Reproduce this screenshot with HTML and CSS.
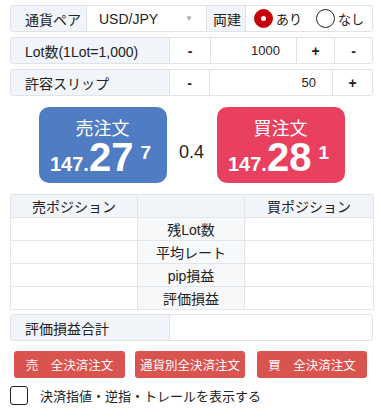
FILE: index.html
```html
<!DOCTYPE html>
<html lang="ja">
<head>
<meta charset="utf-8">
<link rel="stylesheet" href="styles.css">
</head>
<body>
<div class="app">
  <div class="row">
    <div class="cell label w-pair">通貨ペア</div>
    <div class="cell select">USD/JPY<span class="arrow">▼</span></div>
    <div class="cell label w-ryo">両建</div>
    <div class="cell radios">
      <span class="radio on"></span><span class="rtext">あり</span>
      <span class="radio"></span><span class="rtext">なし</span>
    </div>
  </div>
  <div class="row">
    <div class="cell label w-lot">Lot数(1Lot=1,000)</div>
    <div class="cell btn w41">-</div>
    <div class="cell input w86">1000</div>
    <div class="cell btn w38">+</div>
    <div class="cell btn grow">-</div>
  </div>
  <div class="row">
    <div class="cell label w-lot">許容スリップ</div>
    <div class="cell btn w40">-</div>
    <div class="cell input grow">50</div>
    <div class="cell btn w40">+</div>
  </div>

  <div class="prices">
    <div class="pbox sell">
      <div class="ptitle">売注文</div>
      <div class="pnum"><span class="psmall">147.</span><span class="pbig">27</span><span class="psup">7</span></div>
    </div>
    <div class="spread">0.4</div>
    <div class="pbox buy">
      <div class="ptitle">買注文</div>
      <div class="pnum"><span class="psmall">147.</span><span class="pbig">28</span><span class="psup">1</span></div>
    </div>
  </div>

  <table class="pos">
    <colgroup><col class="c1"><col class="c2"><col class="c3"></colgroup>
    <tr class="head"><td>売ポジション</td><td></td><td>買ポジション</td></tr>
    <tr><td></td><td class="mid">残Lot数</td><td></td></tr>
    <tr><td></td><td class="mid">平均レート</td><td></td></tr>
    <tr><td></td><td class="mid">pip損益</td><td></td></tr>
    <tr><td></td><td class="mid">評価損益</td><td></td></tr>
  </table>

  <div class="row total">
    <div class="cell label w-lot">評価損益合計</div>
    <div class="cell grow"></div>
  </div>

  <div class="actions">
    <div class="abtn">売　全決済注文</div>
    <div class="abtn">通貨別全決済注文</div>
    <div class="abtn">買　全決済注文</div>
  </div>

  <div class="check">
    <span class="box"></span>
    <span class="ctext">決済指値・逆指・トレールを表示する</span>
  </div>
</div>
</body>
</html>
```

FILE: styles.css
```css
html, body {
  margin: 0;
  padding: 0;
  background: #ffffff;
}
body {
  font-family: "Liberation Sans", "Noto Sans CJK JP", sans-serif;
  color: #222;
  font-size: 14px;
}
.app {
  width: 363px;
  padding: 5px 0 0 10px;
}
.row {
  display: flex;
  height: 27px;
  box-sizing: border-box;
  border: 1px solid #dfe3e8;
  border-radius: 3px;
  margin-bottom: 5px;
  overflow: hidden;
}
.cell {
  display: flex;
  align-items: center;
  box-sizing: border-box;
  border-left: 1px solid #dfe3e8;
  height: 100%;
  white-space: nowrap;
}
.cell:first-child { border-left: none; }
.label {
  background: #f1f4f8;
  padding-left: 14px;
  font-size: 14px;
  color: #222;
}
.w-pair { width: 75px; flex: none; }
.w-ryo { width: 39px; padding-left: 6px; flex: none; }
.w-lot { width: 158px; flex: none; }
.select {
  width: 120px;
  flex: none;
  padding-left: 12px;
  justify-content: space-between;
  padding-right: 13px;
  font-size: 14px;
}
.arrow {
  color: #aaa;
  font-size: 8px;
}
.radios {
  flex: 1;
  min-width: 0;
  padding-left: 8px;
  font-size: 13px;
}
.radio {
  flex: none;
  width: 19px;
  height: 19px;
  box-sizing: border-box;
  border-radius: 50%;
  border: 1.5px solid #222;
  margin-right: 3px;
  position: relative;
}
.radio.on {
  background: #c8000a;
  border-color: #c8000a;
}
.radio.on::after {
  content: "";
  position: absolute;
  left: 50%;
  top: 50%;
  width: 5px;
  height: 5px;
  margin: -2.5px 0 0 -2.5px;
  border-radius: 50%;
  background: #fff;
}
.rtext { flex: none; margin-right: 14px; }
.btn {
  justify-content: center;
  font-size: 14px;
  font-weight: bold;
  flex: none;
}
.w41 { width: 41px; }
.w40 { width: 40px; }
.w38 { width: 38px; }
.w86 { width: 86px; flex: none; }
.grow { flex: 1; }
.input {
  justify-content: flex-end;
  padding-right: 16px;
  font-size: 13px;
}

.prices {
  display: flex;
  justify-content: center;
  align-items: center;
  margin-top: 11px;
  height: 76px;
}
.pbox {
  width: 128px;
  height: 76px;
  border-radius: 10px;
  color: #fff;
  display: flex;
  flex-direction: column;
  align-items: center;
  box-sizing: border-box;
  padding-top: 9px;
}
.sell { background: #4f7cc3; }
.buy { background: #e9405f; }
.ptitle {
  font-family: "Noto Sans CJK JP", sans-serif;
  font-size: 18px;
  line-height: 22px;
}
.pnum {
  font-weight: bold;
  line-height: 38px;
  white-space: nowrap;
  margin-right: 4px;
}
.psmall { font-size: 20px; }
.pbig { font-size: 40px; }
.psup {
  font-size: 19px;
  vertical-align: top;
  position: relative;
  top: -4px;
  margin-left: 7px;
}
.spread {
  width: 50px;
  text-align: center;
  font-size: 18px;
  padding-top: 14px;
}

.pos {
  margin-top: 11px;
  width: 363px;
  border-collapse: collapse;
  table-layout: fixed;
  font-size: 14px;
}
.c1 { width: 127px; }
.c2 { width: 107px; }
.c3 { width: 129px; }
.pos td {
  border: 1px solid #e2e6ea;
  height: 22px;
  padding: 0;
  text-align: center;
  font-weight: normal;
}
.pos .head td { background: #f1f4f8; }
.pos td.mid { background: #f7f8fa; }

.total {
  margin-top: 4px;
  margin-bottom: 0;
}
.actions {
  display: grid;
  grid-template-columns: 111px 110px 112px;
  column-gap: 10px;
  padding-left: 4px;
  margin-top: 10px;
}
.abtn {
  background: #d9534f;
  color: #fff;
  height: 27px;
  border-radius: 3px;
  display: flex;
  align-items: center;
  justify-content: center;
  font-size: 12.5px;
}
.actions .abtn:last-child { margin-left: 2px; }
.check {
  display: flex;
  align-items: center;
  margin-top: 8px;
}
.box {
  width: 18px;
  height: 19px;
  box-sizing: border-box;
  border: 1.5px solid #222;
  border-radius: 3px;
  margin-right: 12px;
}
.ctext { font-size: 13px; }
```
